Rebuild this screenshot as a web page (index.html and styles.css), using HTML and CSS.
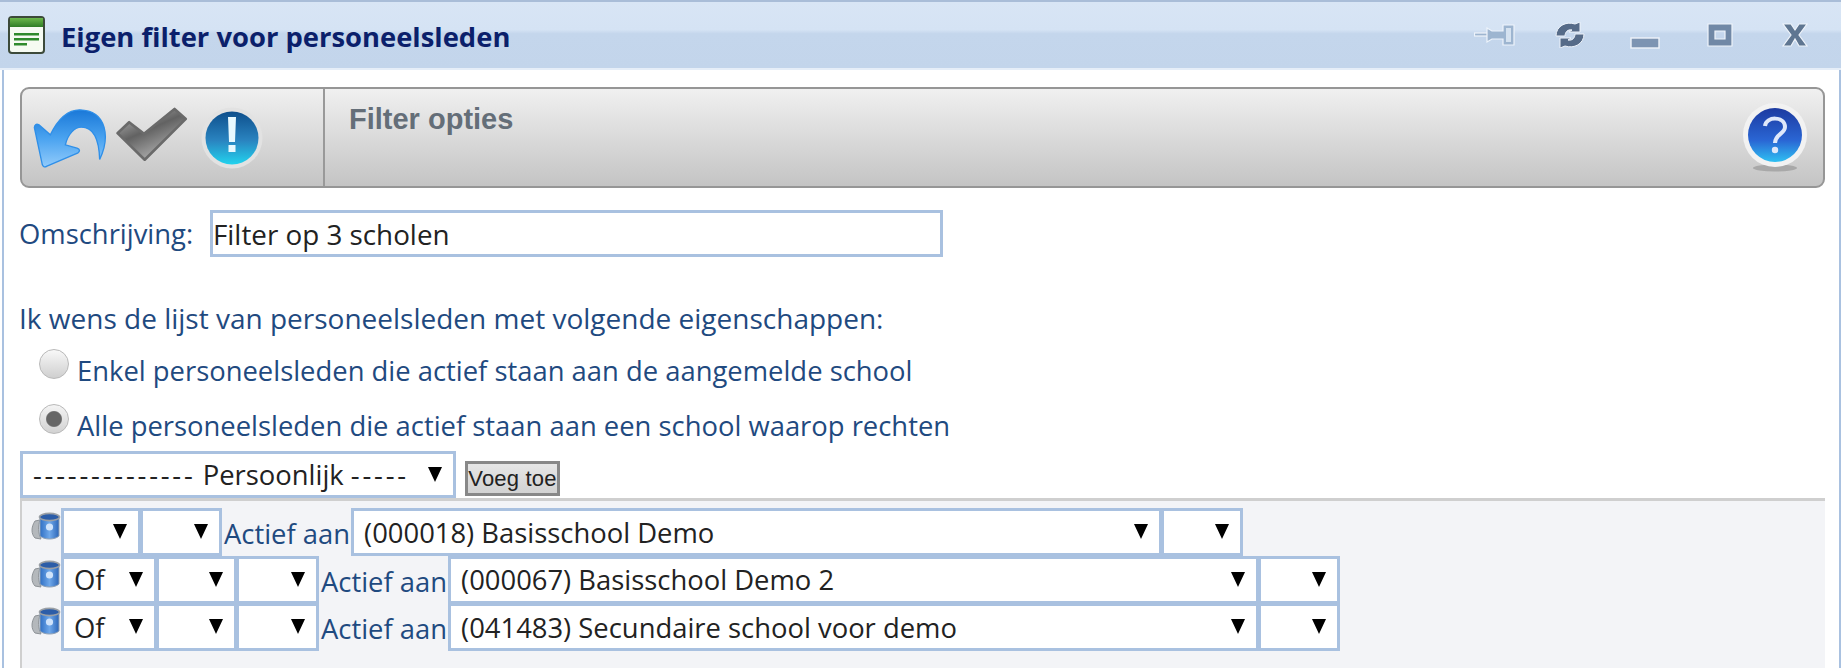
FILE: index.html
```html
<!DOCTYPE html>
<html lang="nl">
<head>
<meta charset="utf-8">
<title>Eigen filter voor personeelsleden</title>
<link rel="stylesheet" href="styles.css">
</head>
<body>
<div class="window">
  <header class="titlebar">
    <svg class="title-icon" viewBox="0 0 37 38" width="37" height="38">
      <defs><linearGradient id="tg" x1="0" y1="0" x2="0" y2="1"><stop offset="0" stop-color="#6cb84a"/><stop offset="1" stop-color="#2f7d25"/></linearGradient></defs>
      <rect x="1" y="1" width="35" height="36" rx="3" fill="#f6fbf2" stroke="#3c4a3a" stroke-width="2"/>
      <rect x="2" y="2" width="33" height="9" fill="url(#tg)"/>
      <rect x="6" y="17" width="25" height="2.5" fill="#2f8a2c"/>
      <rect x="6" y="22" width="25" height="2.5" fill="#2f8a2c"/>
      <rect x="6" y="27" width="13" height="2.5" fill="#2f8a2c"/>
    </svg>
    <h1 class="title">Eigen filter voor personeelsleden</h1>
    <div class="winbtns">
      <span class="winbtn"><svg viewBox="0 0 41 24" width="41" height="24"><g fill="#9db5d0" stroke="#eef4fb" stroke-width="1.2"><rect x="0.5" y="10" width="14" height="3"/><path d="M13 5 L18 8 H29 V2 H40 V22 H29 V16 H18 L13 19 Z"/></g><path d="M32 5 H37 V19 H32 Z" fill="#d5e2f0"/></svg></span>
      <span class="winbtn"><svg viewBox="0 0 30 26" width="30" height="26"><g fill="#566b88" stroke="#eef3fa" stroke-width="1"><path d="M1 14 C1 4 11 -1 20 2 L25 0 L25 10 L14 10 L17 8 C13 7 10 10 10 14 Z"/><path d="M29 12 C29 22 19 27 10 24 L5 26 L5 16 L16 16 L13 18 C17 19 20 16 20 12 Z"/></g></svg></span>
      <span class="winbtn"><svg class="min-icon" viewBox="0 0 30 13" width="30" height="13"><rect x="1" y="1" width="28" height="10" fill="#7d94b2" stroke="#eef3fa" stroke-width="1.4"/></svg></span>
      <span class="winbtn"><svg viewBox="0 0 26 24" width="26" height="24"><path fill-rule="evenodd" d="M1 1 H25 V23 H1 Z M8 8 V16 H18 V8 Z" fill="#7088a6" stroke="#eef3fa" stroke-width="1.2"/></svg></span>
      <span class="winbtn"><svg viewBox="0 0 26 24" width="26" height="24"><path d="M1 1 H9 L13 7 L17 1 H25 L17 12 L25 23 H17 L13 16 L9 23 H1 L9 12 Z" fill="#5f7691" stroke="#eef3fa" stroke-width="1.2"/></svg></span>
    </div>
  </header>

  <main class="content">
    <section class="toolbar">
      <div class="tools">
        <svg class="undo" viewBox="100 75 225 185" width="75" height="62">
          <defs><linearGradient id="ug" x1="0" y1="0" x2="0" y2="1"><stop offset="0" stop-color="#1a78d8"/><stop offset=".5" stop-color="#4aa3f0"/><stop offset="1" stop-color="#92cbfb"/></linearGradient></defs>
          <path d="M300 232 C330 170 325 85 240 83 C205 83 175 110 152 158 L118 128 Q106 122 104 136 L128 248 Q132 258 142 252 L235 212 Q245 203 232 198 L197 188 C205 155 225 135 245 135 C280 135 298 170 300 232 Z" fill="url(#ug)" stroke="#2f8fe8" stroke-width="4"/>
        </svg>
        <svg class="check" viewBox="340 68 225 172" width="75" height="57">
          <defs><linearGradient id="cg" x1="0" y1="0" x2="0.6" y2="1"><stop offset="0" stop-color="#c4c4c4"/><stop offset=".5" stop-color="#626262"/><stop offset="1" stop-color="#b4b4b4"/></linearGradient></defs>
          <path d="M350 150 L385 117 L430 152 L522 77 L556 107 L432 230 Z" fill="url(#cg)" stroke="#6a6a6a" stroke-width="8" stroke-linejoin="round"/>
        </svg>
        <svg class="info" viewBox="0 0 62 62" width="62" height="62">
          <defs><linearGradient id="ig" x1="0" y1="0" x2="0" y2="1"><stop offset="0" stop-color="#0e4f8c"/><stop offset=".55" stop-color="#2a84c0"/><stop offset="1" stop-color="#22d3ee"/></linearGradient></defs>
          <circle cx="31" cy="31" r="30.5" fill="#e2e2e2"/>
          <circle cx="31" cy="31" r="26.5" fill="url(#ig)"/>
          <path d="M27 10 H35 L34 35 H28 Z M27.5 38 H34.5 V45 H27.5 Z" fill="#e8f9ff"/>
        </svg>
      </div>
      <div class="tool-title">
        <h2 class="section-name">Filter opties</h2>
        <svg class="help" viewBox="0 0 64 70" width="64" height="70">
          <defs><linearGradient id="hg" x1="0" y1="0" x2="0" y2="1"><stop offset="0" stop-color="#1c3aa0"/><stop offset=".6" stop-color="#2a66d4"/><stop offset="1" stop-color="#2fc0f2"/></linearGradient></defs>
          <ellipse cx="32" cy="66" rx="22" ry="3.5" fill="#a8a8a8"/>
          <circle cx="32" cy="33" r="32" fill="#f2f2f2"/>
          <circle cx="32" cy="33" r="27" fill="url(#hg)"/>
          <path d="M22 24 C23 14 42 14 42 25 C42 32 32 32 32 41" fill="none" stroke="#dfe8fa" stroke-width="4"/>
          <circle cx="32" cy="48" r="3.2" fill="#dfe8fa"/>
        </svg>
      </div>
    </section>

    <div class="desc-row">
      <label class="desc-label" for="omschrijving">Omschrijving:</label>
      <input class="desc-input" id="omschrijving" type="text" value="Filter op 3 scholen">
    </div>

    <p class="lead">Ik wens de lijst van personeelsleden met volgende eigenschappen:</p>

    <label class="choice"><input class="radio" type="radio" name="scope"><span class="choice-text">Enkel personeelsleden die actief staan aan de aangemelde school</span></label>
    <label class="choice"><input class="radio" type="radio" name="scope" checked><span class="choice-text">Alle personeelsleden die actief staan aan een school waarop rechten</span></label>

    <div class="add-row">
      <div class="sel sel-add"><div class="sel-box sel-text" role="combobox"><span class="dashes">--------------</span> Persoonlijk <span class="dashes">-----</span></div></div>
      <button class="add-btn" type="button">Voeg toe</button>
    </div>

    <section class="panel">
      <div class="rule">
        <svg class="trash" viewBox="0 0 30 28" width="30" height="28"><use href="#bin"/></svg>
        <div class="sel w80"><select class="sel-box"><option></option></select></div>
        <div class="sel w82"><select class="sel-box"><option></option></select></div>
        <span class="rule-label">Actief aan</span>
        <div class="sel wmain"><select class="sel-box"><option>(000018) Basisschool Demo</option></select></div>
        <div class="sel w82"><select class="sel-box"><option></option></select></div>
      </div>
      <div class="rule">
        <svg class="trash" viewBox="0 0 30 28" width="30" height="28"><use href="#bin"/></svg>
        <div class="sel w96"><select class="sel-box"><option>Of</option></select></div>
        <div class="sel w81"><select class="sel-box"><option></option></select></div>
        <div class="sel w83"><select class="sel-box"><option></option></select></div>
        <span class="rule-label">Actief aan</span>
        <div class="sel wmain"><select class="sel-box"><option>(000067) Basisschool Demo 2</option></select></div>
        <div class="sel w82"><select class="sel-box"><option></option></select></div>
      </div>
      <div class="rule">
        <svg class="trash" viewBox="0 0 30 28" width="30" height="28"><use href="#bin"/></svg>
        <div class="sel w96"><select class="sel-box"><option>Of</option></select></div>
        <div class="sel w81"><select class="sel-box"><option></option></select></div>
        <div class="sel w83"><select class="sel-box"><option></option></select></div>
        <span class="rule-label">Actief aan</span>
        <div class="sel wmain"><select class="sel-box"><option>(041483) Secundaire school voor demo</option></select></div>
        <div class="sel w82"><select class="sel-box"><option></option></select></div>
      </div>
    </section>
  </main>
</div>

<svg class="defs" width="0" height="0">
  <defs>
    <linearGradient id="bb" x1="0" y1="0" x2="1" y2="0"><stop offset="0" stop-color="#2f6fc4"/><stop offset=".5" stop-color="#6fa8ea"/><stop offset="1" stop-color="#2c66b8"/></linearGradient>
    <g id="bin">
      <path d="M4 9 C0 15 0 22 4 26 L10 27 C7 21 7 14 9 8 Z" fill="#b4b8bc" stroke="#8d9297" stroke-width="1"/>
      <path d="M9 6 H28 V24 C24 28 13 28 9 24 Z" fill="url(#bb)" stroke="#8d9fb4" stroke-width="1"/>
      <ellipse cx="18.5" cy="5" rx="10" ry="3.6" fill="#2c5da8" stroke="#9a9fa5" stroke-width="1.6"/>
      <circle cx="18.5" cy="15" r="3.6" fill="#cfe3fb"/>
    </g>
  </defs>
</svg>
</body>
</html>
```

FILE: styles.css
```css
* { box-sizing: border-box; }

html, body {
  margin: 0;
  height: 100%;
  background: #fff;
}

body {
  font-family: "Open Sans", "Noto Sans", sans-serif;
  overflow: hidden;
}

.defs { display: block; height: 0; }

.window {
  display: flex;
  flex-direction: column;
  height: 668px;
}

/* Title bar */
.titlebar {
  display: flex;
  align-items: center;
  height: 70px;
  padding: 0 9px 0 8px;
  border-top: 2px solid #a9bdd8;
  border-bottom: 2px solid #e6eef8;
  background: linear-gradient(#d8e5f5 0, #d5e3f4 42%, #c4d6ec 48%, #c3d5eb 100%);
}

.title-icon { flex: none; }

.title {
  margin: 2px 0 0 16px;
  font-size: 27.4px;
  font-weight: 700;
  color: #0b1f6b;
  white-space: nowrap;
}

.winbtns {
  display: flex;
  align-items: center;
  margin-left: auto;
}

.winbtn {
  display: flex;
  align-items: center;
  justify-content: center;
  width: 75px;
  height: 26px;
}

.min-icon { margin-top: 16px; }

/* Main area */
.content {
  flex: 1;
  display: flex;
  flex-direction: column;
  min-height: 0;
  margin-left: 2px;
  padding: 17px 14px 0 16px;
  border-left: 2px solid #a9c1e0;
  border-right: 2px solid #a9c1e0;
}

.toolbar {
  flex: none;
  display: flex;
  height: 101px;
  border: 2px solid #969696;
  border-radius: 9px;
  background: linear-gradient(#f0f0f0, #c4c4c4);
}

.tools {
  flex: none;
  display: flex;
  align-items: center;
  gap: 6px;
  width: 303px;
  padding-left: 11px;
  border-right: 2px solid #999;
}

.check { margin-bottom: 6px; }
.info { margin-left: 6px; }

.tool-title {
  flex: 1;
  display: flex;
  justify-content: space-between;
  padding: 0 16px 0 24px;
}

.section-name {
  margin: 14px 0 0;
  font-family: "Liberation Sans", Arial, sans-serif;
  font-size: 29px;
  font-weight: 700;
  color: #646e78;
}

.help { margin-top: 13px; }

/* Form */
.desc-row {
  flex: none;
  display: flex;
  align-items: center;
  height: 47px;
  margin-top: 22px;
}

.desc-label, .choice-text, .rule-label {
  font-size: 27.4px;
  color: #1f4a80;
  white-space: nowrap;
}

.desc-label { width: 191px; margin-left: -1px; }

.desc-input {
  width: 733px;
  height: 47px;
  padding: 0;
  border: 3px solid #a9c1e0;
  outline: none;
  font: inherit;
  font-size: 27.8px;
  color: #222;
  background: #fff;
}

.lead {
  margin: 41px 0 0 -1px;
  font-size: 28px;
  line-height: 40px;
  color: #1f4a80;
  white-space: nowrap;
}

.choice {
  display: flex;
  align-items: flex-start;
  height: 55px;
  padding-left: 19px;
}

.choice:first-of-type { margin-top: 11px; }

.radio {
  appearance: none;
  flex: none;
  width: 30px;
  height: 30px;
  margin: 0;
  border: 1px solid #b9b9b9;
  border-radius: 50%;
  background: linear-gradient(#f8f8f8, #cfcfcf);
}

.radio:checked {
  background: radial-gradient(circle, #666 0 7px, #777 7.5px, transparent 8.5px), linear-gradient(#f4f4f4, #d2d2d2);
}

.choice-text {
  margin: 2px 0 0 8px;
  line-height: 40px;
}

.add-row {
  flex: none;
  display: flex;
  align-items: flex-end;
  height: 47px;
  margin-top: -8px;
}

.sel {
  position: relative;
  flex: none;
  height: 48px;
}

.sel::after {
  content: "";
  position: absolute;
  top: 50%;
  right: 14px;
  margin-top: -8px;
  border-top: 15px solid #000;
  border-left: 7.5px solid transparent;
  border-right: 7.5px solid transparent;
  pointer-events: none;
}

.sel-box {
  appearance: none;
  display: block;
  width: 100%;
  height: 100%;
  padding: 0 0 0 10px;
  border: 3px solid #a9c1e0;
  border-radius: 0;
  outline: none;
  background: #fff;
  font-family: "Open Sans", "Noto Sans", sans-serif;
  font-size: 27.4px;
  color: #222;
}

.sel-text {
  display: flex;
  align-items: center;
  gap: 0.26em;
  white-space: nowrap;
}

.dashes { letter-spacing: 2.8px; }

.sel-add { width: 436px; height: 47px; }

.add-btn {
  width: 95px;
  height: 35px;
  margin: 0 0 2px 9px;
  padding: 0;
  border: 3px solid #888;
  background: linear-gradient(#e6e6e6, #d2d2d2);
  font-family: "Liberation Sans", Arial, sans-serif;
  font-size: 22px;
  letter-spacing: 0.2px;
  color: #222;
}

.panel {
  flex: 1;
  min-height: 0;
  padding: 7px 0 0 9px;
  border-top: 3px solid #cfcfcf;
  border-left: 2px solid #cfcfcf;
  background: #f3f4f7;
}

.rule {
  display: flex;
  align-items: flex-start;
  height: 47.5px;
}

.rule .sel + .sel { margin-left: -1px; }

.trash { flex: none; margin-top: 4px; }

.rule-label {
  margin: 6px 1px 0 2px;
  line-height: 40px;
}

.w80 { width: 80px; }
.w81 { width: 81px; }
.w82 { width: 82px; }
.w83 { width: 83px; }
.w96 { width: 96px; }
.wmain { width: 811px; }
```
